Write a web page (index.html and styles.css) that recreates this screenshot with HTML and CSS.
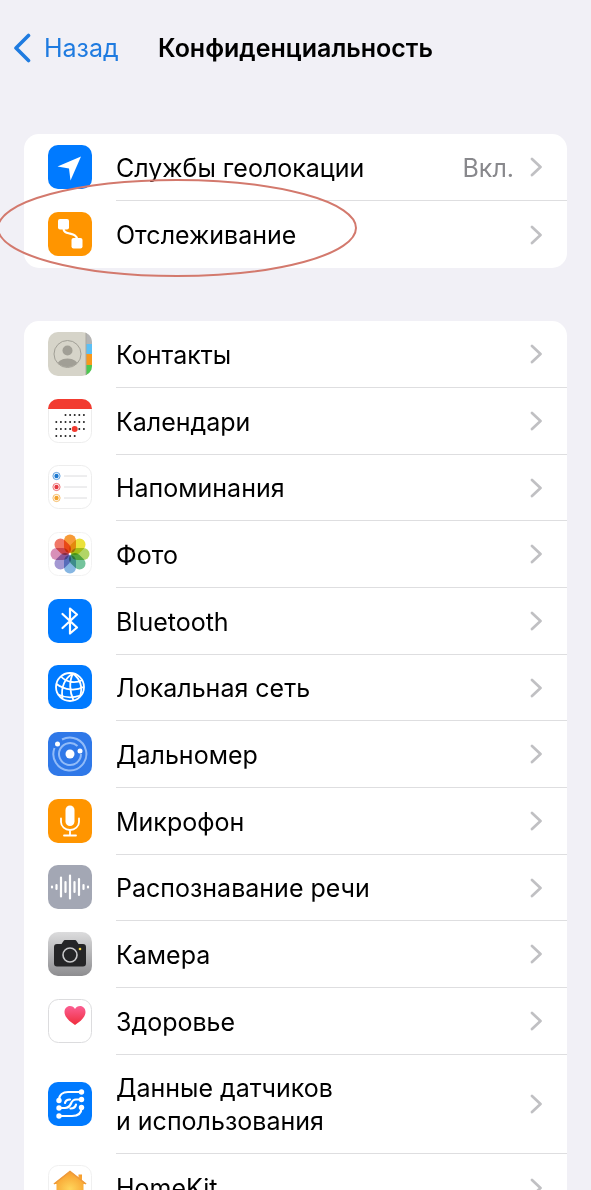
FILE: index.html
```html
<!DOCTYPE html>
<html lang="ru">

<head>
    <meta charset="UTF-8">
    <meta name="viewport" content="width=device-width, initial-scale=1.0">
    <title>Конфиденциальность</title>
    <link rel="stylesheet" href="styles.css">
</head>

<body>
    <!-- shared shapes -->
    <svg class="defs" width="0" height="0" aria-hidden="true">
        <symbol id="chevron" viewBox="0 0 12 20">
            <path d="M2 2l8.500 8-8.500 8" fill="none" stroke="#c0c0c3" stroke-width="2.700" stroke-linecap="round" stroke-linejoin="round" />
        </symbol>
        <linearGradient id="cameraBg" x1="0" y1="0" x2="0" y2="1">
            <stop offset="0" stop-color="#dcdcdd" />
            <stop offset="1" stop-color="#8d8d90" />
        </linearGradient>
        <linearGradient id="heartBg" x1="0" y1="0" x2="0" y2="1">
            <stop offset="0" stop-color="#fb5f93" />
            <stop offset="1" stop-color="#f02d3c" />
        </linearGradient>
        <radialGradient id="homeBg" cx="0.5" cy="0.6" r="0.6">
            <stop offset="0" stop-color="#ffd65c" />
            <stop offset="1" stop-color="#f79a2a" />
        </radialGradient>
    </svg>

    <div class="screen">
        <header class="navbar">
            <button class="back" type="button">
                <svg width="20" height="30" viewBox="0 0 20 30" aria-hidden="true">
                    <path d="M16.500 2.500L4 15l12.500 12.500" fill="none" stroke="currentColor" stroke-width="3.600" stroke-linecap="round" stroke-linejoin="round" />
                </svg>
                <span>Назад</span>
            </button>
            <h1>Конфиденциальность</h1>
        </header>

        <main>
            <nav class="group">
                <a class="row" href="#location">
                    <svg class="icon" viewBox="0 0 44 44">
                        <rect width="44" height="44" rx="10" fill="#007aff" />
                        <path d="M33 11.500L9.500 21.500l11.500 2 1.500 12z" fill="#fff" />
                    </svg>
                    <span class="body">
                        <span class="label">Службы геолокации</span>
                        <span class="value">Вкл.</span>
                        <svg class="chevron"><use href="#chevron" /></svg>
                    </span>
                </a>
                <a class="row" href="#tracking">
                    <svg class="icon" viewBox="0 0 44 44">
                        <rect width="44" height="44" rx="10" fill="#ff9500" />
                        <rect x="10" y="7" width="11" height="10.500" rx="2" fill="#fff" />
                        <rect x="23.500" y="26" width="11" height="10.500" rx="2" fill="#fff" />
                        <path d="M15.500 16c0 4 2 4.500 6 5.500s7 1.500 8 6" fill="none" stroke="#fff" stroke-width="2.200" />
                    </svg>
                    <span class="body">
                        <span class="label">Отслеживание</span>
                        <svg class="chevron"><use href="#chevron" /></svg>
                    </span>
                </a>
                <svg class="marker" viewBox="0 0 362 102" aria-hidden="true">
                    <ellipse cx="181" cy="51" rx="179" ry="48" fill="none" stroke="#d3796d" stroke-width="2" />
                </svg>
            </nav>

            <nav class="group">
                <a class="row" href="#contacts">
                    <svg class="icon" viewBox="0 0 44 44">
                        <clipPath id="contactsClip"><rect width="44" height="44" rx="10" /></clipPath>
                        <g clip-path="url(#contactsClip)">
                            <rect width="44" height="44" fill="#d6d4c9" />
                            <rect x="38" width="6" height="12" fill="#b4b4b4" />
                            <rect x="38" y="12" width="6" height="10" fill="#5cc0f5" />
                            <rect x="38" y="22" width="6" height="11" fill="#f7981d" />
                            <rect x="38" y="33" width="6" height="11" fill="#4cc84f" />
                            <path d="M38 0v44" stroke="#aaa89f" />
                            <clipPath id="personClip"><circle cx="19.500" cy="22" r="13" /></clipPath>
                            <g clip-path="url(#personClip)" fill="#a19f96">
                                <circle cx="19.500" cy="18.500" r="5" />
                                <ellipse cx="19.500" cy="34" rx="11" ry="7.500" />
                            </g>
                            <circle cx="19.500" cy="22" r="13.500" fill="none" stroke="#a19f96" />
                        </g>
                    </svg>
                    <span class="body">
                        <span class="label">Контакты</span>
                        <svg class="chevron"><use href="#chevron" /></svg>
                    </span>
                </a>
                <a class="row" href="#calendars">
                    <svg class="icon" viewBox="0 0 44 44">
                        <rect x="0.500" y="0.500" width="43" height="43" rx="10" fill="#fff" stroke="#ededed" />
                        <path d="M0 10A10 10 0 0 1 10 0h24a10 10 0 0 1 10 10z" fill="#f23b30" />
                        <g fill="none" stroke="#222" stroke-width="2" stroke-linecap="round" stroke-dasharray="0 4.600">
                            <path d="M17.500 16H37" />
                            <path d="M8.300 23H37" />
                            <path d="M8.300 30H37" />
                            <path d="M8.300 37H28" />
                        </g>
                        <circle cx="26.700" cy="30" r="3" fill="#f23b30" />
                    </svg>
                    <span class="body">
                        <span class="label">Календари</span>
                        <svg class="chevron"><use href="#chevron" /></svg>
                    </span>
                </a>
                <a class="row" href="#reminders">
                    <svg class="icon" viewBox="0 0 44 44">
                        <rect x="0.500" y="0.500" width="43" height="43" rx="10" fill="#fff" stroke="#ededed" />
                        <path d="M16 11h23M16 22h23M16 33h23" stroke="#dcdcde" />
                        <circle cx="8.500" cy="11" r="2.200" fill="#1c78d0" />
                        <circle cx="8.500" cy="11" r="3.600" fill="none" stroke="#1c78d0" stroke-opacity="0.700" />
                        <circle cx="8.500" cy="22" r="2.200" fill="#e63a42" />
                        <circle cx="8.500" cy="22" r="3.600" fill="none" stroke="#e63a42" stroke-opacity="0.700" />
                        <circle cx="8.500" cy="33" r="2.200" fill="#f2a22c" />
                        <circle cx="8.500" cy="33" r="3.600" fill="none" stroke="#f2a22c" stroke-opacity="0.700" />
                    </svg>
                    <span class="body">
                        <span class="label">Напоминания</span>
                        <svg class="chevron"><use href="#chevron" /></svg>
                    </span>
                </a>
                <a class="row" href="#photos">
                    <svg class="icon" viewBox="0 0 44 44">
                        <rect x="0.500" y="0.500" width="43" height="43" rx="10" fill="#fff" stroke="#f2f2f2" />
                        <g class="petals">
                            <rect x="16" y="2.500" width="12" height="18.500" rx="6" fill="#f79b38" />
                            <rect x="16" y="2.500" width="12" height="18.500" rx="6" fill="#ebe23a" transform="rotate(45 22 22)" />
                            <rect x="16" y="2.500" width="12" height="18.500" rx="6" fill="#b2d566" transform="rotate(90 22 22)" />
                            <rect x="16" y="2.500" width="12" height="18.500" rx="6" fill="#74c49c" transform="rotate(135 22 22)" />
                            <rect x="16" y="2.500" width="12" height="18.500" rx="6" fill="#86b6e2" transform="rotate(180 22 22)" />
                            <rect x="16" y="2.500" width="12" height="18.500" rx="6" fill="#a398d2" transform="rotate(225 22 22)" />
                            <rect x="16" y="2.500" width="12" height="18.500" rx="6" fill="#d890b8" transform="rotate(270 22 22)" />
                            <rect x="16" y="2.500" width="12" height="18.500" rx="6" fill="#f07868" transform="rotate(315 22 22)" />
                        </g>
                    </svg>
                    <span class="body">
                        <span class="label">Фото</span>
                        <svg class="chevron"><use href="#chevron" /></svg>
                    </span>
                </a>
                <a class="row" href="#bluetooth">
                    <svg class="icon" viewBox="0 0 44 44">
                        <rect width="44" height="44" rx="10" fill="#007aff" />
                        <path d="M14.500 15l14.500 13.500-7 6v-25l7 6L14.500 29" fill="none" stroke="#fff" stroke-width="2.200" stroke-linecap="round" stroke-linejoin="round" />
                    </svg>
                    <span class="body">
                        <span class="label">Bluetooth</span>
                        <svg class="chevron"><use href="#chevron" /></svg>
                    </span>
                </a>
                <a class="row" href="#network">
                    <svg class="icon" viewBox="0 0 44 44">
                        <rect width="44" height="44" rx="10" fill="#007aff" />
                        <g fill="none" stroke="#fff" stroke-width="1.800">
                            <circle cx="22" cy="22" r="14" />
                            <path d="M25 8.500C17 13 12.500 22 14.500 33.500M25 8.500C21 16 21.500 27 25.500 35.500M25 8.500C32 14 35 22 32 31.500" />
                            <path d="M13 11.500C19 18 28 18.500 34.500 15M8.500 19C17 25.500 28 26 35.500 22M10 29.500c7 3.500 15 3.500 22.500 1" />
                        </g>
                    </svg>
                    <span class="body">
                        <span class="label">Локальная сеть</span>
                        <svg class="chevron"><use href="#chevron" /></svg>
                    </span>
                </a>
                <a class="row" href="#nearby">
                    <svg class="icon" viewBox="0 0 44 44">
                        <rect width="44" height="44" rx="10" fill="#2f78e8" />
                        <g fill="none" stroke="#91bbf8" stroke-width="2">
                            <path d="M14 7.500A16.500 16.500 0 1 1 6.500 16" />
                            <path d="M29.500 14A11 11 0 1 0 33 22" />
                        </g>
                        <circle cx="22" cy="22" r="4.500" fill="#fff" />
                        <circle cx="9.500" cy="12" r="2.500" fill="#fff" />
                        <circle cx="32" cy="19" r="2.500" fill="#fff" />
                    </svg>
                    <span class="body">
                        <span class="label">Дальномер</span>
                        <svg class="chevron"><use href="#chevron" /></svg>
                    </span>
                </a>
                <a class="row" href="#microphone">
                    <svg class="icon" viewBox="0 0 44 44">
                        <rect width="44" height="44" rx="10" fill="#ff9500" />
                        <rect x="17.500" y="6.500" width="9" height="20.500" rx="4.500" fill="#fff" />
                        <path d="M13 19.500v3.500a9 8 0 0 0 18 0v-3.500M22 31v5M16 36.500h12" fill="none" stroke="#fff" stroke-width="1.800" stroke-linecap="round" />
                    </svg>
                    <span class="body">
                        <span class="label">Микрофон</span>
                        <svg class="chevron"><use href="#chevron" /></svg>
                    </span>
                </a>
                <a class="row" href="#speech">
                    <svg class="icon" viewBox="0 0 44 44">
                        <rect width="44" height="44" rx="10" fill="#a3a7b4" />
                        <path d="M4 21.500v1M8.500 20v4M13 12.500v19M17.500 17v10M22 10.500v23M26.500 17v10M31 14v16M35.500 20v4M40 21.500v1" stroke="#fff" stroke-width="2.200" stroke-linecap="round" />
                    </svg>
                    <span class="body">
                        <span class="label">Распознавание речи</span>
                        <svg class="chevron"><use href="#chevron" /></svg>
                    </span>
                </a>
                <a class="row" href="#camera">
                    <svg class="icon" viewBox="0 0 44 44">
                        <rect width="44" height="44" rx="10" fill="url(#cameraBg)" />
                        <path d="M9 12h4.500l2-3q.5-1 1.500-1h10q1 0 1.500 1l2 3H35a3 3 0 0 1 3 3v16.500a3 3 0 0 1-3 3H9a3 3 0 0 1-3-3V15a3 3 0 0 1 3-3z" fill="#252527" />
                        <circle cx="22" cy="23" r="7" fill="none" stroke="#c9c9cb" stroke-width="1.600" />
                        <circle cx="32" cy="17" r="1.300" fill="#f5d742" />
                    </svg>
                    <span class="body">
                        <span class="label">Камера</span>
                        <svg class="chevron"><use href="#chevron" /></svg>
                    </span>
                </a>
                <a class="row" href="#health">
                    <svg class="icon" viewBox="0 0 44 44">
                        <rect x="0.500" y="0.500" width="43" height="43" rx="10" fill="#fff" stroke="#dcdcde" />
                        <path d="M27 26C21 22 16.500 18 16.500 13c0-3.500 2.500-6 5.500-6 2.200 0 4 1.200 5 3 1-1.800 2.800-3 5-3 3 0 5.500 2.500 5.500 6 0 5-4.500 9-10.500 13z" fill="url(#heartBg)" />
                    </svg>
                    <span class="body">
                        <span class="label">Здоровье</span>
                        <svg class="chevron"><use href="#chevron" /></svg>
                    </span>
                </a>
                <a class="row row-tall" href="#sensors">
                    <svg class="icon" viewBox="0 0 44 44">
                        <rect width="44" height="44" rx="10" fill="#007aff" />
                        <g fill="none" stroke="#fff" stroke-width="2.200" stroke-linecap="round">
                            <path d="M33.500 10H20c-5 0-9 3-9 8.500" />
                            <path d="M33.500 17.500H28c-3 0-4 1.500-5 4s-3 4.500-6 4.500h-6" />
                            <path d="M17 21c.5-2.500 2-3.500 5-3.500M22.500 26.500c3.500 0 5-1.500 5.500-4" />
                            <path d="M11 34h13c6 0 9.500-3 9.500-8.500" />
                        </g>
                        <g fill="#fff">
                            <circle cx="33.500" cy="10" r="2.700" />
                            <circle cx="33.500" cy="17.500" r="2.700" />
                            <circle cx="33.500" cy="25.500" r="2.700" />
                            <circle cx="11" cy="18.500" r="2.700" />
                            <circle cx="11" cy="26" r="2.700" />
                            <circle cx="11" cy="34" r="2.700" />
                        </g>
                    </svg>
                    <span class="body">
                        <span class="label">Данные датчиков<br>и использования</span>
                        <svg class="chevron"><use href="#chevron" /></svg>
                    </span>
                </a>
                <a class="row" href="#homekit">
                    <svg class="icon" viewBox="0 0 44 44">
                        <rect x="0.500" y="0.500" width="43" height="43" rx="10" fill="#fff" stroke="#f0f0f0" />
                        <path d="M22 6l8.500 6.500V9.500h3.500v6l4.500 3.500h-3v17h-27V19h-3z" fill="url(#homeBg)" />
                        <path d="M6 19L22 6.500 38 19" fill="none" stroke="#ee9a3c" stroke-width="1.500" />
                    </svg>
                    <span class="body">
                        <span class="label">HomeKit</span>
                        <svg class="chevron"><use href="#chevron" /></svg>
                    </span>
                </a>
            </nav>
        </main>
    </div>
</body>

</html>
```
FILE: styles.css
```css
* {
    box-sizing: border-box;
}

body {
    margin: 0;
    background-color: #f1f0f6;
    color: #000;
    font-family: Inter, "Liberation Sans", sans-serif;
    font-size: 25px;
    line-height: 33px;
}

.defs {
    position: absolute;
}

.screen {
    height: 100vh;
    overflow: hidden;
}

.navbar {
    display: grid;
    grid-template-columns: 1fr auto 1fr;
    align-items: center;
    height: 96px;
    padding: 0 12px;
}

.navbar h1 {
    margin: 0;
    font-size: 25px;
    font-weight: 600;
}

.back {
    display: flex;
    align-items: center;
    gap: 12px;
    padding: 0;
    border: none;
    background: none;
    color: #1f7be0;
    font: inherit;
    cursor: pointer;
}

main {
    padding: 38px 24px 0;
}

.group {
    position: relative;
    margin-bottom: 53px;
    border-radius: 15px;
    background-color: #fff;
}

.row {
    display: flex;
    align-items: center;
    height: 67px;
    padding-left: 24px;
    color: inherit;
    text-decoration: none;
}

/* keeps the list close to two thirds of a pixel per row */
.row:nth-child(3n) {
    height: 66px;
}

.row.row-tall {
    height: 99px;
}

.icon {
    flex: none;
    width: 44px;
    height: 44px;
    margin-bottom: 2px;
}

.body {
    display: flex;
    flex: 1;
    align-items: center;
    align-self: stretch;
    margin-left: 24px;
    padding-right: 25px;
    border-bottom: 1px solid #dedee0;
}

.group .row:last-of-type .body {
    border-bottom: none;
}

.label,
.value {
    padding-top: 2px;
}

.label {
    flex: 1;
}

.value {
    margin-right: 16px;
    color: #88888c;
}

.chevron {
    flex: none;
    width: 12px;
    height: 20px;
}

.petals rect {
    mix-blend-mode: multiply;
}

/* hand-drawn ring around the tracking row */
.marker {
    position: absolute;
    top: 43px;
    left: -28px;
    width: 362px;
    height: 102px;
    pointer-events: none;
}
```
